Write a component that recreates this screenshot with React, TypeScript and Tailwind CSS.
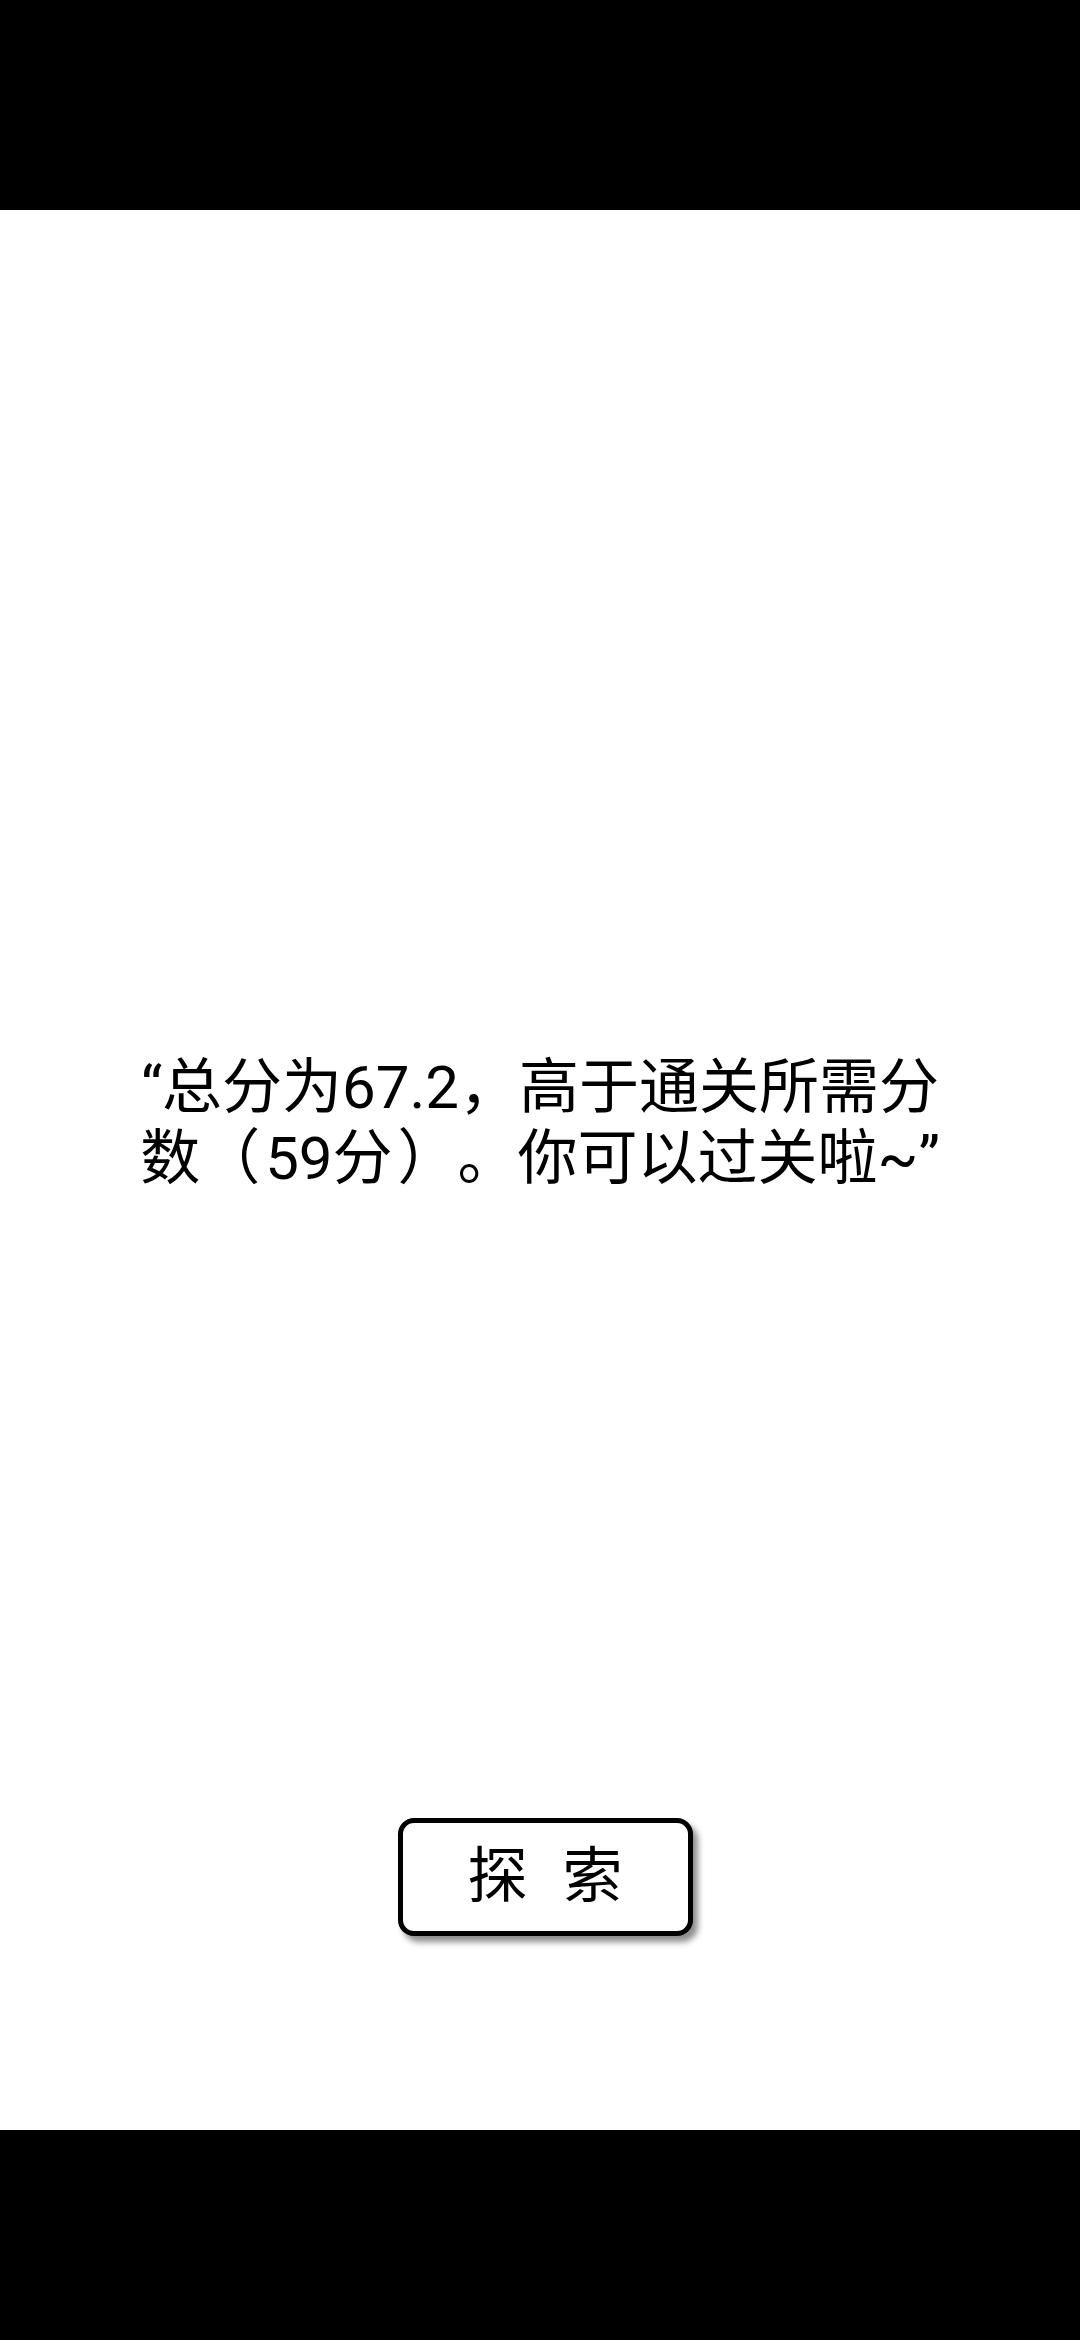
export default function App() {
  return (
    <div
      className="w-[1080px] h-[2340px] flex flex-col bg-white"
      style={{ fontFamily: 'Roboto, "Noto Sans CJK SC", sans-serif' }}
    >
      <div className="h-[210px] bg-black shrink-0" />
      <div className="flex-1 flex flex-col items-center">
        <div className="mt-[842px] w-[900px] text-center text-[60px] leading-[71px] text-black [text-spacing-trim:space-all] [font-kerning:none]">
          “总分为67.2，高于通关所需分
          <br />
          数（<span className="px-[5px]">59分</span>）。你可以过关啦~”
        </div>
        <div className="mt-[624px] ml-[10px] w-[295px] h-[118px] rounded-[16px] border-[5px] border-black bg-white flex items-center justify-center gap-[35px] shadow-[5px_6px_6px_rgba(0,0,0,0.45)] text-[60px] text-black">
          <span>探</span>
          <span>索</span>
        </div>
      </div>
      <div className="h-[210px] bg-black shrink-0" />
    </div>
  );
}
